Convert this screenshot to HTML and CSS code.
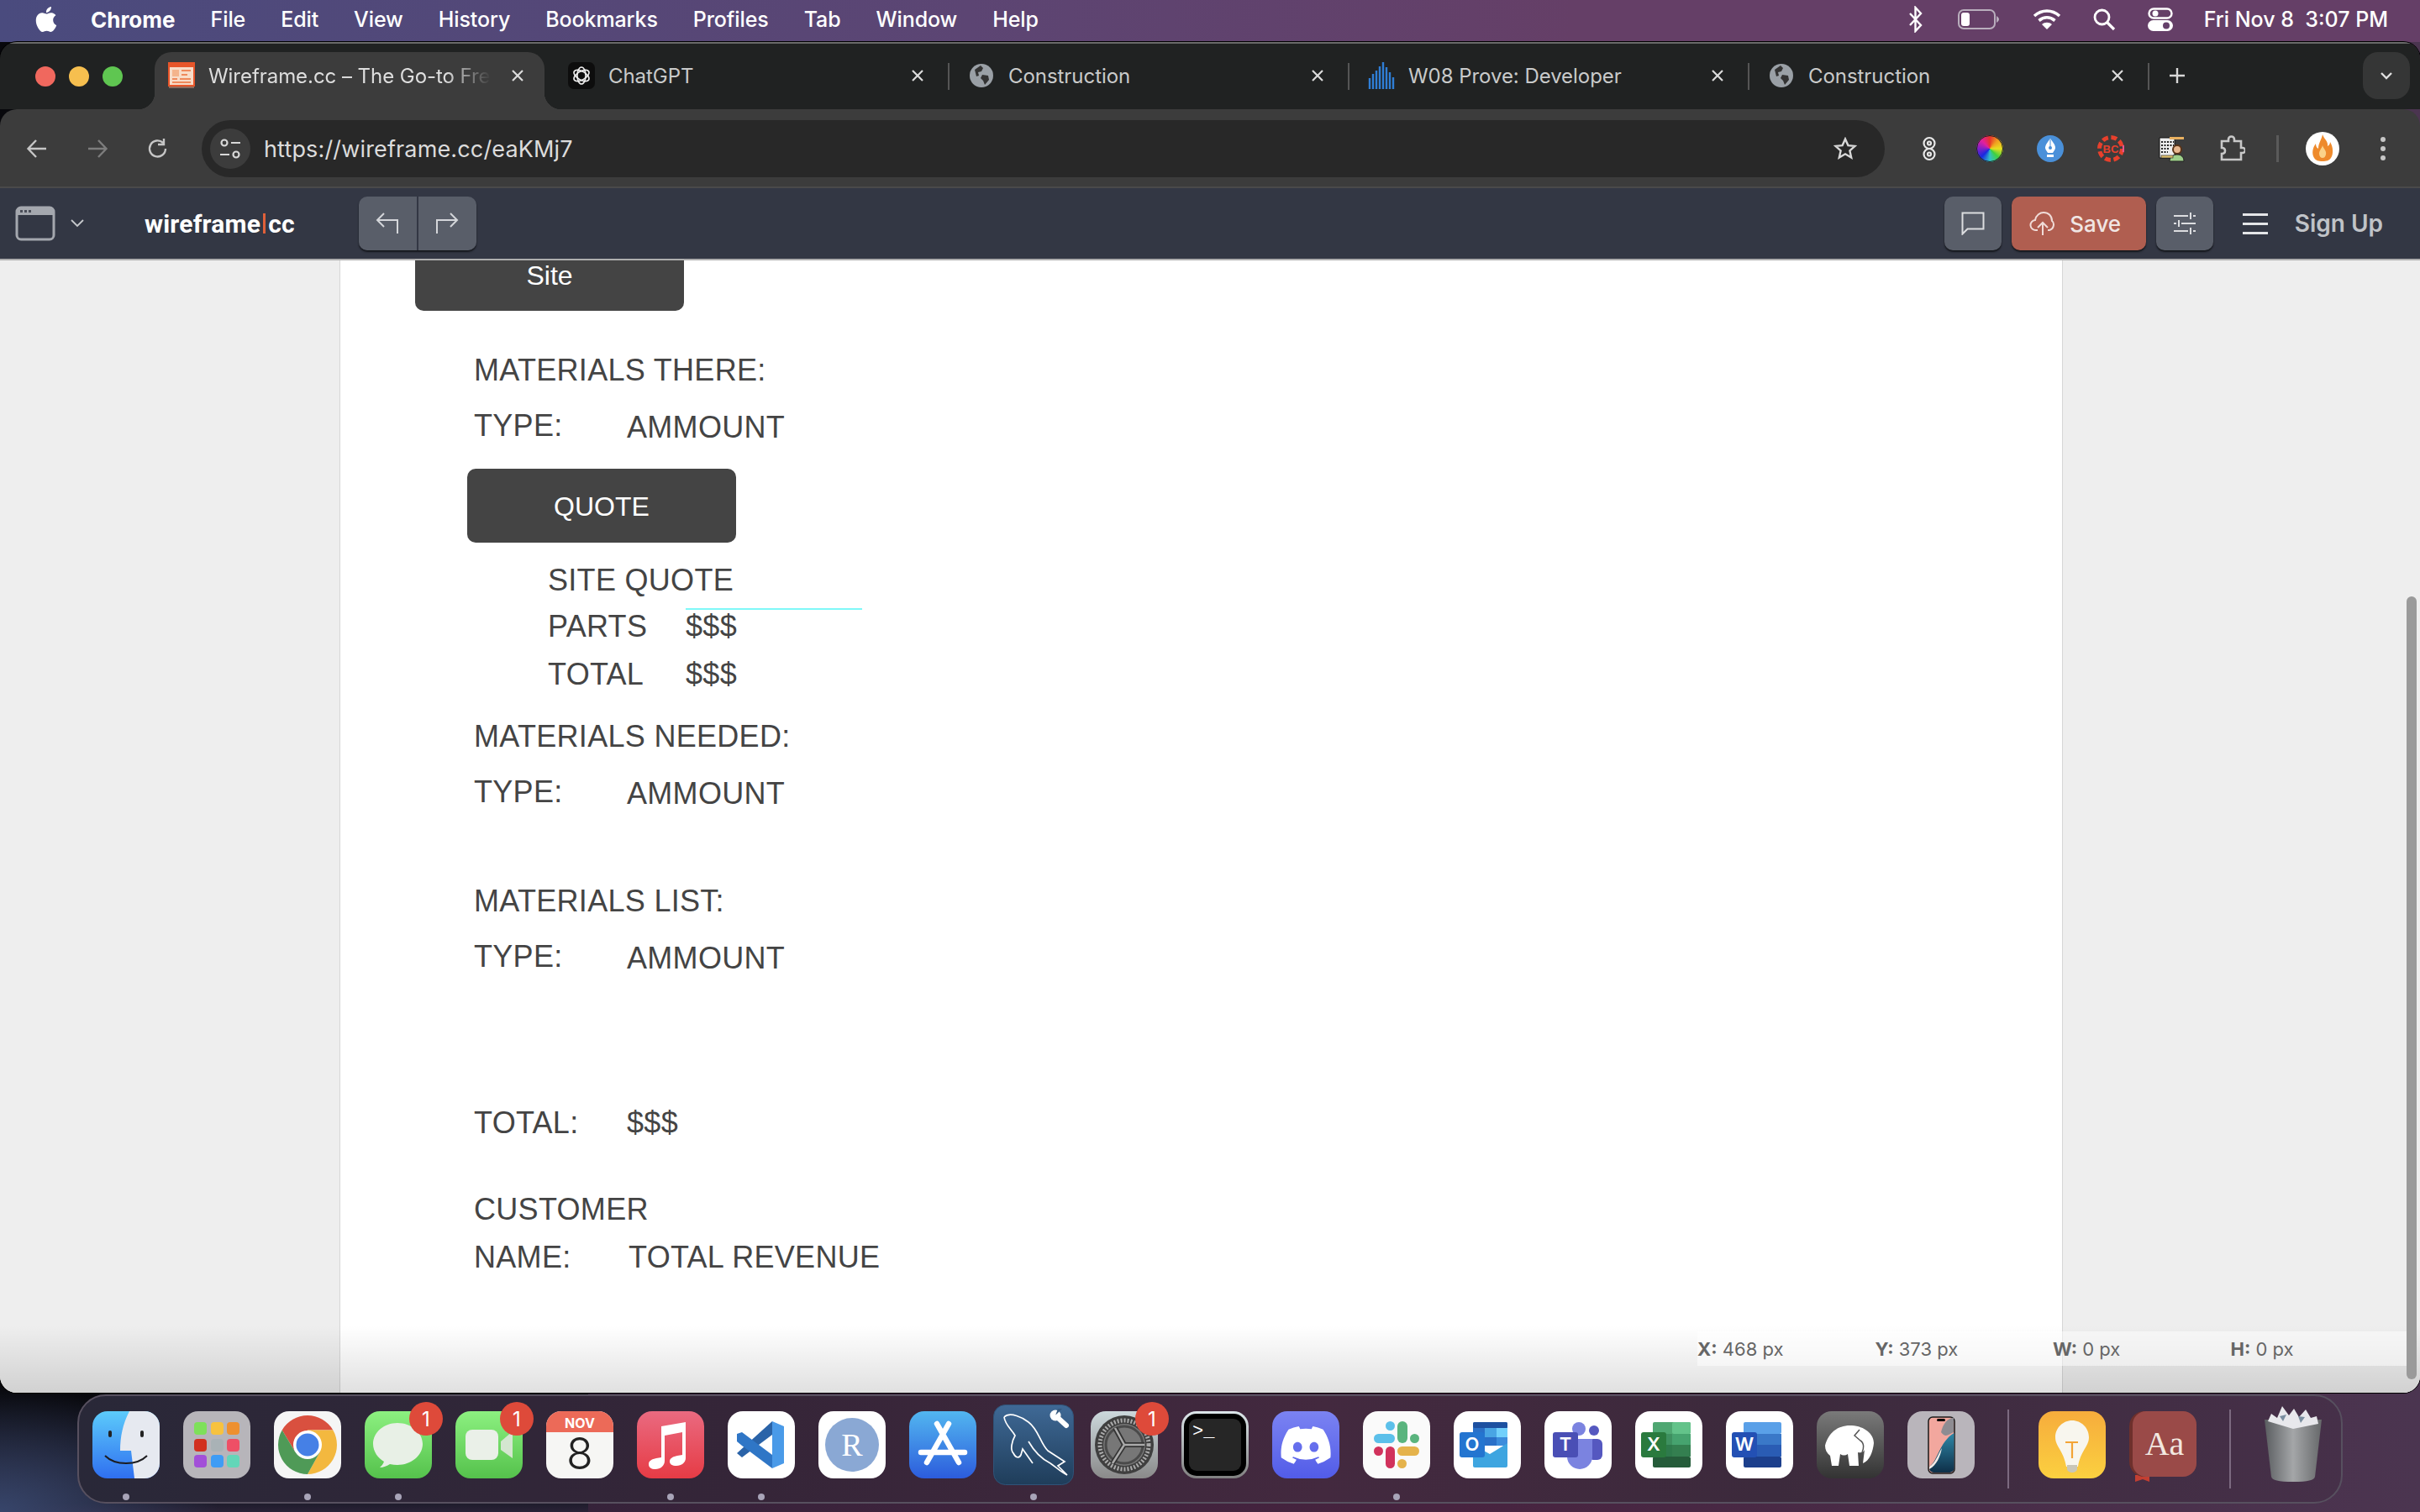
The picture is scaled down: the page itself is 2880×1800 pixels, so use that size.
FILE: index.html
```html
<!DOCTYPE html>
<html>
<head>
  <meta charset="utf-8">
  <title>Wireframe.cc</title>
  <link rel="stylesheet" href="styles.css">
</head>
<body>
<div class="desktop">

  <!-- mac menu bar -->
  <div class="menubar">
    <svg class="apple" viewBox="0 0 24 24"><path fill="#fff" d="M12.152 6.896c-.948 0-2.415-1.078-3.96-1.04-2.04.027-3.91 1.183-4.961 3.014-2.117 3.675-.546 9.103 1.519 12.09 1.013 1.454 2.208 3.09 3.792 3.039 1.52-.065 2.09-.987 3.935-.987 1.831 0 2.35.987 3.96.948 1.637-.026 2.676-1.48 3.676-2.948 1.156-1.688 1.636-3.325 1.662-3.415-.039-.013-3.182-1.221-3.22-4.857-.026-3.04 2.48-4.494 2.597-4.559-1.429-2.09-3.623-2.324-4.39-2.376-2-.156-3.675 1.09-4.61 1.09zM15.53 3.83c.843-1.012 1.4-2.427 1.245-3.83-1.207.052-2.662.805-3.532 1.818-.78.896-1.454 2.338-1.273 3.714 1.338.104 2.715-.688 3.559-1.701"/></svg>
    <span class="menu-app">Chrome</span>
    <span>File</span><span>Edit</span><span>View</span><span>History</span><span>Bookmarks</span><span>Profiles</span><span>Tab</span><span>Window</span><span>Help</span>
    <div class="menu-status">
      <svg class="st-bt" viewBox="0 0 20 32"><path fill="none" stroke="#fff" stroke-width="2.4" d="M3 9l13 14-6.500 7V2l6.500 7L3 23"/></svg>
      <svg class="st-batt" viewBox="0 0 50 26"><rect x="1" y="2" width="43" height="22" rx="6" fill="none" stroke="#b9aebd" stroke-width="2"/><rect x="4" y="5" width="10" height="16" rx="3" fill="#fff"/><path d="M46 9c2 1 3 3 3 4s-1 3-3 4z" fill="#b9aebd"/></svg>
      <svg class="st-wifi" viewBox="0 0 34 26"><path fill="none" stroke="#fff" stroke-width="3.600" d="M2 9c9-8 21-8 30 0M7.500 14.500c6-5 13-5 19 0"/><path fill="#fff" d="M17 25l-6-6c3.500-3 8.500-3 12 0z"/></svg>
      <svg class="st-search" viewBox="0 0 28 28"><circle cx="11.500" cy="11.500" r="8.500" fill="none" stroke="#fff" stroke-width="2.800"/><path d="M18 18l8 8" stroke="#fff" stroke-width="3.200"/></svg>
      <svg class="st-cc" viewBox="0 0 30 28"><rect x="1.500" y="1.500" width="27" height="11" rx="5.500" fill="none" stroke="#fff" stroke-width="2.400"/><circle cx="9" cy="7" r="3.500" fill="#fff"/><rect x="0" y="15" width="30" height="13" rx="6.500" fill="#fff"/><circle cx="22" cy="21.500" r="4" fill="#65406a"/></svg>
      <span class="clock">Fri Nov 8&nbsp;&nbsp;3:07 PM</span>
    </div>
  </div>

  <div class="window">

    <!-- tabs -->
    <div class="tabstrip">
      <div class="lights"><i class="red"></i><i class="yellow"></i><i class="green"></i></div>

      <div class="tab active">
        <svg class="favicon" viewBox="0 0 32 32"><rect x="1" y="1" width="30" height="27" fill="#f8dcc8" stroke="#e8562a" stroke-width="2"/><rect x="1" y="1" width="30" height="5" fill="#e8562a"/><rect x="5" y="9" width="8" height="8" fill="#f4b48c"/><path d="M16 10h11M16 15h7M5 20h6M14 20h13M5 24h22" stroke="#ef8a5c" stroke-width="2"/><rect x="1" y="29" width="30" height="2" fill="#8c6a5c"/></svg>
        <span class="tab-title fade">Wireframe.cc – The Go-to Fre</span>
        <svg class="tab-x" viewBox="0 0 16 16"><path d="M2 2l12 12M14 2L2 14"/></svg>
      </div>

      <div class="tab">
        <svg class="favicon" viewBox="0 0 32 32"><rect width="32" height="32" rx="7" fill="#0d0d0d"/><g fill="none" stroke="#eee" stroke-width="1.600"><ellipse cx="16" cy="16" rx="5" ry="10"/><ellipse cx="16" cy="16" rx="5" ry="10" transform="rotate(60 16 16)"/><ellipse cx="16" cy="16" rx="5" ry="10" transform="rotate(120 16 16)"/></g></svg>
        <span class="tab-title">ChatGPT</span>
        <svg class="tab-x" viewBox="0 0 16 16"><path d="M2 2l12 12M14 2L2 14"/></svg>
      </div>

      <div class="tab">
        <svg class="favicon" viewBox="0 0 32 32"><circle cx="16" cy="16" r="14" fill="#9aa0a6"/><path fill="#333" d="M8 9l7-5 3 3-2 4-4 1 1 4-3 1zM17 15l7 1 1 5-5 6-2-5-3-3z"/></svg>
        <span class="tab-title">Construction</span>
        <svg class="tab-x" viewBox="0 0 16 16"><path d="M2 2l12 12M14 2L2 14"/></svg>
      </div>

      <div class="tab">
        <svg class="favicon" viewBox="0 0 32 32"><path stroke="#2f7ed6" stroke-width="2.400" d="M2 32V19M6 32V14M10 32V10M14 32V5M18 32V0M22 32V6M26 32V12M30 32V18"/></svg>
        <span class="tab-title">W08 Prove: Developer</span>
        <svg class="tab-x" viewBox="0 0 16 16"><path d="M2 2l12 12M14 2L2 14"/></svg>
      </div>

      <div class="tab">
        <svg class="favicon" viewBox="0 0 32 32"><circle cx="16" cy="16" r="14" fill="#9aa0a6"/><path fill="#333" d="M8 9l7-5 3 3-2 4-4 1 1 4-3 1zM17 15l7 1 1 5-5 6-2-5-3-3z"/></svg>
        <span class="tab-title">Construction</span>
        <svg class="tab-x" viewBox="0 0 16 16"><path d="M2 2l12 12M14 2L2 14"/></svg>
      </div>

      <svg class="tab-plus" viewBox="0 0 20 20"><path d="M10 1v18M1 10h18"/></svg>
      <div class="tab-menu"><svg viewBox="0 0 16 10"><path d="M2 2l6 6 6-6"/></svg></div>
    </div>

    <!-- chrome toolbar -->
    <div class="toolbar">
      <div class="nav-btn"><svg viewBox="0 0 26 26"><path d="M24 13H3M12 3L2.500 13 12 23"/></svg></div>
      <div class="nav-btn dim"><svg viewBox="0 0 26 26"><path d="M2 13h21M14 3l9.500 10L14 23"/></svg></div>
      <div class="nav-btn"><svg viewBox="0 0 26 26"><path d="M22 13a9.500 9.500 0 1 1-3-7M20 1v7h-7"/></svg></div>
      <div class="urlbar">
        <div class="site-info"><svg viewBox="0 0 26 26"><circle cx="6" cy="6" r="3.500"/><path d="M14 6h11M1 20h11"/><circle cx="20" cy="20" r="3.500"/></svg></div>
        <span class="url">https://wireframe.cc/eaKMj7</span>
        <svg class="star" viewBox="0 0 28 28"><path d="M14 2.500l3.400 7.600 8.100.8-6.100 5.500 1.800 8.100L14 20.300l-7.200 4.200 1.800-8.100-6.100-5.500 8.100-.8z"/></svg>
      </div>
      <div class="ext"><svg viewBox="0 0 32 32"><g fill="none" stroke="#e8e8e8" stroke-width="2.200"><circle cx="16" cy="9.500" r="6.500"/><circle cx="16" cy="22.500" r="6.500"/><circle cx="16" cy="9.500" r="2"/><circle cx="16" cy="22.500" r="2"/></g></svg></div>
      <div class="ext"><div class="ext-wheel"></div></div>
      <div class="ext"><svg viewBox="0 0 32 32"><circle cx="16" cy="16" r="16" fill="#4a90d9"/><path fill="#fff" d="M16 4c-4 5-6 8-6 11 0 2 2 4 3 6h6c1-2 3-4 3-6 0-3-2-6-6-11z"/><circle cx="16" cy="15" r="2" fill="#4a90d9"/><path stroke="#4a90d9" d="M16 5v9"/><rect x="12" y="23" width="8" height="3" fill="#fff"/></svg></div>
      <div class="ext"><svg viewBox="0 0 32 32"><circle cx="16" cy="16" r="13.500" fill="none" stroke="#e8402c" stroke-width="5" stroke-dasharray="7 3.600"/><path d="M31 12a16 16 0 0 1 0 8" stroke="#e8558c" stroke-width="3" fill="none"/><text class="ext-bc" x="16" y="21">BC</text></svg></div>
      <div class="ext"><svg viewBox="0 0 32 32"><path fill="#eee" stroke="#111" d="M2 3h18v24H2z"/><path stroke="#222" stroke-width="2" stroke-dasharray="2 1.500" d="M4 8h15M4 12h15M4 16h10M4 20h8"/><rect x="14" y="2" width="17" height="3" fill="#e8b060"/><circle cx="23" cy="17" r="5" fill="#e8b890" stroke="#5a3418" stroke-width="2"/><path fill="#9ed08a" stroke="#222" d="M14 31c0-5 4-8 9-8s8 3 8 8z"/><rect x="4" y="24" width="14" height="3" fill="#e0c070" stroke="#222" stroke-width=".6"/></svg></div>
      <div class="ext"><svg viewBox="0 0 32 32"><path fill="none" stroke="#c8c8c8" stroke-width="2.600" d="M4 7h8v-2a3.500 3.500 0 0 1 7 0v2h8v8h2a3 3 0 0 1 0 6h-2v8H4v-7c3 0 4-1.500 4-3.500S7 15 4 15z"/></svg></div>
      <div class="ext-sep"></div>
      <div class="avatar"><svg viewBox="0 0 40 40"><circle cx="20" cy="20" r="20" fill="#fff"/><path fill="#ee8a2c" d="M20 3c2 6 7 8 6 14 2-1 3-3 3-5 4 6 4 15 1 19-2 3-5 4-10 4s-8-1-10-4c-3-5-2-12 2-17 0 3 1 5 3 6 0-7 4-11 5-17z"/><path fill="#fbd38a" d="M20 16c1 4 5 6 4 11-1 3-2 4-4 4s-4-2-4-5c0-4 3-6 4-10z"/></svg></div>
      <div class="kebab"><i></i><i></i><i></i></div>
    </div>

    <!-- wireframe.cc toolbar -->
    <div class="appbar">
      <svg class="frame-icon" viewBox="0 0 48 42"><rect x="2" y="2" width="44" height="38" rx="5" fill="none" stroke="#a4a7ae" stroke-width="3"/><path d="M2 11V7a5 5 0 0 1 5-5h34a5 5 0 0 1 5 5v4z" fill="#a4a7ae"/><path d="M6 6.500h3M11 6.500h3M16 6.500h3" stroke="#4a4d58" stroke-width="3"/></svg>
      <svg class="frame-chev" viewBox="0 0 16 10"><path d="M1 1l7 7 7-7"/></svg>
      <div class="logo">wireframe<i></i>cc</div>
      <div class="undo-group">
        <button class="undo-btn"><svg viewBox="0 0 30 30"><path d="M27 27V11H3M11 3l-8 8 8 8"/></svg></button>
        <button class="undo-btn"><svg viewBox="0 0 30 30"><path d="M3 27V11h24M19 3l8 8-8 8"/></svg></button>
      </div>
      <div class="app-right">
        <button class="tool-btn"><svg viewBox="0 0 28 28"><path d="M1.500 1.500h25v19h-19l-6 6z"/></svg></button>
        <button class="save-btn"><svg viewBox="0 0 32 32"><path d="M10 24H8a6 6 0 0 1-1-12c1-6 6-9 10-9 6 0 10 4 10 10 3 2 3 9-3 11h-2M16 30V16M10 21l6-6 6 6"/></svg>Save</button>
        <button class="tool-btn"><svg viewBox="0 0 28 28"><path d="M1 5h17M24 5h3M21 1v8M1 14h3M10 14h17M7 10v8M1 23h17M24 23h3M21 19v8"/></svg></button>
        <div class="burger"><i></i><i></i><i></i></div>
        <span class="signup">Sign Up</span>
      </div>
    </div>

    <!-- page area -->
    <div class="workspace">
      <div class="side"></div>
      <div class="canvas">
        <div class="wf-btn wf-site">Site</div>
        <div class="wf-text x1 y1">MATERIALS THERE:</div>
        <div class="wf-text x1 y2">TYPE:</div>
        <div class="wf-text x2 y2b">AMMOUNT</div>
        <div class="wf-btn wf-quote">QUOTE</div>
        <div class="wf-text x3 y3">SITE QUOTE</div>
        <div class="wf-line"></div>
        <div class="wf-text x3 y4">PARTS</div>
        <div class="wf-text x4 y4">$$$</div>
        <div class="wf-text x3 y5">TOTAL</div>
        <div class="wf-text x4 y5">$$$</div>
        <div class="wf-text x1 y6">MATERIALS NEEDED:</div>
        <div class="wf-text x1 y7">TYPE:</div>
        <div class="wf-text x2 y7b">AMMOUNT</div>
        <div class="wf-text x1 y8">MATERIALS LIST:</div>
        <div class="wf-text x1 y9">TYPE:</div>
        <div class="wf-text x2 y9b">AMMOUNT</div>
        <div class="wf-text x1 y10">TOTAL:</div>
        <div class="wf-text x2 y10">$$$</div>
        <div class="wf-text x1 y11">CUSTOMER</div>
        <div class="wf-text x1 y12">NAME:</div>
        <div class="wf-text x5 y12">TOTAL REVENUE</div>
      </div>
      <div class="side"></div>
      <div class="fade-bottom"></div>
      <div class="coords">
        <span><b>X:</b> 468 px</span>
        <span><b>Y:</b> 373 px</span>
        <span><b>W:</b> 0 px</span>
        <span><b>H:</b> 0 px</span>
      </div>
      <div class="scroll-thumb"></div>
    </div>
  </div>

  <!-- dock -->
  <div class="dock">
    <div class="dock-item dotted"><svg viewBox="0 0 80 80"><defs><linearGradient id="fb" x1="0" y1="0" x2="0" y2="1"><stop offset="0" stop-color="#5ccbfb"/><stop offset="1" stop-color="#2f6ff0"/></linearGradient></defs><rect width="80" height="80" rx="18" fill="url(#fb)"/><path fill="#e6e9f0" d="M44 0h18a18 18 0 0 1 18 18v44a18 18 0 0 1-18 18H50l-4-33H33c0-16 3-32 11-47z"/><rect x="19" y="23" width="4" height="8" rx="2" fill="#222"/><rect x="57" y="23" width="4" height="8" rx="2" fill="#222"/><path d="M15 53c12 12 38 12 50 0" fill="none" stroke="#1c1c20" stroke-width="2"/></svg></div>

    <div class="dock-item"><svg viewBox="0 0 80 80"><rect width="80" height="80" rx="18" fill="#b7b5ba"/><rect x="13" y="13" width="15" height="15" rx="4" fill="#7ee05a"/><rect x="33" y="13" width="15" height="15" rx="4" fill="#f7c23f"/><rect x="52" y="13" width="15" height="15" rx="4" fill="#ee9030"/><rect x="13" y="33" width="15" height="15" rx="4" fill="#d2301f"/><rect x="33" y="33" width="15" height="15" rx="4" fill="#a9b2b6"/><rect x="52" y="33" width="15" height="15" rx="4" fill="#ee4f66"/><rect x="13" y="52" width="15" height="15" rx="4" fill="#a24fd8"/><rect x="33" y="52" width="15" height="15" rx="4" fill="#3f9cf5"/><rect x="52" y="52" width="15" height="15" rx="4" fill="#63d6b8"/></svg></div>

    <div class="dock-item dotted"><svg viewBox="0 0 80 80"><rect width="80" height="80" rx="18" fill="#f5f5f5"/><path fill="#d9503f" d="M9.700 22.500a35 35 0 0 1 60.600 0H40L25 48z"/><path fill="#f3b83f" d="M70.300 22.500A35 35 0 0 1 40 75l15-27-15-25.500z"/><path fill="#4f9a57" d="M40 75A35 35 0 0 1 9.700 22.500L25 48l30 0z"/><circle cx="40" cy="40" r="17" fill="#fff"/><circle cx="40" cy="40" r="13.500" fill="#4580e6"/></svg></div>

    <div class="dock-item dotted"><svg viewBox="0 0 80 80"><defs><linearGradient id="gr" x1="0" y1="0" x2="0" y2="1"><stop offset="0" stop-color="#8cf080"/><stop offset="1" stop-color="#55c24c"/></linearGradient></defs><rect width="80" height="80" rx="18" fill="url(#gr)"/><path fill="#e8f0e6" d="M39 14c-16 0-29 11-29 25 0 9 6 17 13 21-1 3-3 5-5 7 4 0 9-2 12-4 3 .5 6 1 9 1 16 0 30-11 30-25S55 14 39 14z"/></svg><b class="badge">1</b></div>

    <div class="dock-item"><svg viewBox="0 0 80 80"><rect width="80" height="80" rx="18" fill="url(#gr)"/><rect x="12" y="22" width="39" height="36" rx="8" fill="#eaf0e8"/><path fill="#d4e6d0" d="M54 36l14-12v32L54 46z"/></svg><b class="badge">1</b></div>

    <div class="dock-item"><svg viewBox="0 0 80 80"><rect width="80" height="80" rx="18" fill="#f6f6f4"/><path fill="#ec6a58" d="M0 25V18A18 18 0 0 1 18 0h44a18 18 0 0 1 18 18v7z"/><text class="ic-nov" x="40" y="20">NOV</text><text class="ic-eight" x="40" y="69">8</text></svg></div>

    <div class="dock-item dotted"><svg viewBox="0 0 80 80"><defs><linearGradient id="mu" x1="0" y1="0" x2="0" y2="1"><stop offset="0" stop-color="#ea6a80"/><stop offset="1" stop-color="#e63b45"/></linearGradient></defs><rect width="80" height="80" rx="18" fill="url(#mu)"/><path fill="#fff" d="M29 18l29-5v43c0 5-5 9-11 9-5 0-8-2-8-5 0-4 4-6 9-7l6-1V25l-21 4v30c0 6-5 10-11 10-5 0-8-2-8-6 0-4 4-6 9-7l6-1z"/></svg></div>

    <div class="dock-item dotted"><svg viewBox="0 0 80 80"><rect width="80" height="80" rx="18" fill="#fff"/><path fill="#2a63a8" d="M53 12L11 50l6 5 36-27z"/><path fill="#2f76c6" d="M11 27l6-2 36 27v16l-36-27-6-5z"/><path fill="#4a9ae8" d="M53 12l14 6v44l-14 6z"/></svg></div>

    <div class="dock-item"><svg viewBox="0 0 80 80"><rect width="80" height="80" rx="18" fill="#fff"/><circle cx="40" cy="40" r="32" fill="#8aa8d4"/><text class="ic-r" x="40" y="53">R</text></svg></div>

    <div class="dock-item"><svg viewBox="0 0 80 80"><defs><linearGradient id="as" x1="0" y1="0" x2="0" y2="1"><stop offset="0" stop-color="#52b6f0"/><stop offset="1" stop-color="#2c5cdc"/></linearGradient></defs><rect width="80" height="80" rx="18" fill="url(#as)"/><path fill="none" stroke="#fff" stroke-width="6.500" stroke-linecap="round" d="M33 15l26 46M47 15L21 61M14 49h52"/></svg></div>

    <div class="dock-item dotted big"><svg viewBox="0 0 96 96"><defs><linearGradient id="my" x1="0" y1="0" x2="0" y2="1"><stop offset="0" stop-color="#3f6996"/><stop offset="1" stop-color="#1f3d5a"/></linearGradient></defs><rect x=".5" y=".5" width="95" height="95" rx="14" fill="url(#my)" stroke="#2f5378"/><path fill="none" stroke="#fff" stroke-width="1.700" d="M13 15C20 8 36 16 42 21 54 30 56 46 65 55L85 68 77 73 88 84C80 80 74 74 68 70 60 66 50 58 42 44M13 15C14 24 22 30 26 37 22 44 20 54 24 58 27 64 31 64 33 60L35 53 47 70"/><circle cx="74" cy="13" r="6.500" fill="#fff"/><path fill="#35597f" d="M74 13l3-8h5z"/><path stroke="#fff" stroke-width="6" stroke-linecap="round" d="M76 15l11 10"/></svg></div>

    <div class="dock-item"><svg viewBox="0 0 80 80"><defs><linearGradient id="sy" x1="0" y1="0" x2="0" y2="1"><stop offset="0" stop-color="#ccd8dc"/><stop offset="1" stop-color="#8a8a8a"/></linearGradient></defs><rect width="80" height="80" rx="18" fill="url(#sy)"/><circle cx="40" cy="40" r="35" fill="#3f3f3f"/><circle cx="40" cy="40" r="29" fill="none" stroke="#aaa" stroke-width="5" stroke-dasharray="2 2"/><circle cx="40" cy="40" r="25" fill="#777"/><circle cx="40" cy="40" r="22" fill="none" stroke="#4a4a4a" stroke-width="3"/><path stroke="#333" stroke-width="6" d="M40 40l-11-20M40 40l24 0M40 40L26 62"/><path stroke="#aaa" stroke-width="2.500" d="M40 40l-11-20M40 40l24 0M40 40L26 62"/></svg><b class="badge">1</b></div>

    <div class="dock-item"><svg viewBox="0 0 80 80"><defs><linearGradient id="te" x1="0" y1="0" x2="0" y2="1"><stop offset="0" stop-color="#dce6ea"/><stop offset="1" stop-color="#808080"/></linearGradient></defs><rect width="80" height="80" rx="18" fill="url(#te)"/><rect x="3" y="3" width="74" height="74" rx="15" fill="#000"/><rect x="9" y="9" width="62" height="62" rx="9" fill="#262626"/><text class="ic-term" x="13" y="30">&gt;_</text></svg></div>

    <div class="dock-item"><svg viewBox="0 0 80 80"><defs><linearGradient id="di" x1="0" y1="0" x2="0" y2="1"><stop offset="0" stop-color="#7b83f2"/><stop offset="1" stop-color="#525ce8"/></linearGradient></defs><rect width="80" height="80" rx="18" fill="url(#di)"/><g transform="translate(10.500 18) scale(.465)"><path fill="#fff" d="M107.7,8.07A105.15,105.15,0,0,0,81.47,0a72.06,72.06,0,0,0-3.36,6.83A97.68,97.68,0,0,0,49,6.83,72.37,72.37,0,0,0,45.64,0,105.89,105.89,0,0,0,19.39,8.09C2.79,32.65-1.71,56.6.54,80.21h0A105.73,105.73,0,0,0,32.71,96.36,77.7,77.7,0,0,0,39.6,85.25a68.42,68.42,0,0,1-10.85-5.18c.91-.66,1.8-1.34,2.66-2a75.57,75.57,0,0,0,64.32,0c.87.71,1.76,1.39,2.66,2a68.68,68.68,0,0,1-10.87,5.19,77,77,0,0,0,6.89,11.1A105.25,105.25,0,0,0,126.6,80.22h0C129.24,52.84,122.09,29.11,107.7,8.07ZM42.45,65.69C36.18,65.69,31,60,31,53s5-12.74,11.43-12.74S54,46,53.89,53,48.84,65.69,42.45,65.69Zm42.24,0C78.41,65.69,73.25,60,73.25,53s5-12.74,11.44-12.74S96.23,46,96.12,53,91.08,65.69,84.69,65.69Z"/></g></svg></div>

    <div class="dock-item dotted"><svg viewBox="0 0 80 80"><rect width="80" height="80" rx="18" fill="#fafafa"/><rect x="13" y="27" width="25" height="11" rx="5.500" fill="#5cc0ea"/><circle cx="32.500" cy="17.500" r="5.500" fill="#5cc0ea"/><rect x="41" y="12" width="12" height="26" rx="6" fill="#5ab47e"/><circle cx="61.500" cy="32.500" r="5.500" fill="#5ab47e"/><rect x="41" y="42" width="26" height="11" rx="5.500" fill="#e5b34c"/><circle cx="46.500" cy="62.500" r="5.500" fill="#e5b34c"/><rect x="27" y="42" width="11" height="26" rx="5.500" fill="#d1325c"/><circle cx="18.500" cy="47.500" r="5.500" fill="#d1325c"/></svg></div>

    <div class="dock-item"><svg viewBox="0 0 80 80"><rect width="80" height="80" rx="18" fill="#fff"/><rect x="23" y="13" width="41" height="28" rx="2" fill="#2a70c8"/><rect x="23" y="13" width="41" height="7" rx="2" fill="#1d50a0"/><rect x="51" y="20" width="13" height="11" fill="#72d0fb"/><rect x="37" y="20" width="14" height="11" fill="#49a5e4"/><rect x="51" y="31" width="13" height="10" fill="#3c8cdc"/><path fill="#3ea5e0" d="M23 40l20 11 21-13v27a2 2 0 0 1-2 2H25a2 2 0 0 1-2-2z"/><rect x="7" y="25" width="30" height="30" rx="3" fill="#2475d0"/><text class="ic-office" x="22" y="47">O</text></svg></div>

    <div class="dock-item"><svg viewBox="0 0 80 80"><rect width="80" height="80" rx="18" fill="#fff"/><circle cx="59" cy="23" r="6" fill="#5558c0"/><rect x="52" y="33" width="17" height="25" rx="6" fill="#5558c0"/><circle cx="41" cy="21" r="8" fill="#7b83e0"/><path fill="#7b83e0" d="M27 33h30v21a15 15 0 0 1-30 0z"/><rect x="10" y="25" width="30" height="30" rx="3" fill="#4a4fb5"/><text class="ic-office" x="25" y="47">T</text></svg></div>

    <div class="dock-item"><svg viewBox="0 0 80 80"><rect width="80" height="80" rx="18" fill="#fff"/><rect x="21" y="13" width="45" height="14" rx="2" fill="#4fa772"/><rect x="44" y="13" width="22" height="14" rx="2" fill="#63c38a"/><rect x="21" y="27" width="23" height="13" fill="#3e9060"/><rect x="44" y="27" width="22" height="13" fill="#46a36f"/><rect x="21" y="40" width="23" height="14" fill="#2e7a4c"/><rect x="44" y="40" width="22" height="14" fill="#347f50"/><rect x="21" y="54" width="45" height="13" rx="2" fill="#255c3a"/><rect x="7" y="25" width="30" height="30" rx="3" fill="#2a7a3e"/><text class="ic-office" x="22" y="47">X</text></svg></div>

    <div class="dock-item"><svg viewBox="0 0 80 80"><rect width="80" height="80" rx="18" fill="#fff"/><rect x="21" y="13" width="45" height="14" rx="2" fill="#5aa0e8"/><rect x="21" y="27" width="45" height="13" fill="#3a78c8"/><rect x="21" y="40" width="45" height="14" fill="#2a5cb4"/><rect x="21" y="54" width="45" height="13" rx="2" fill="#1c3f8c"/><rect x="7" y="25" width="30" height="30" rx="3" fill="#2350b4"/><text class="ic-office" x="22" y="47">W</text></svg></div>

    <div class="dock-item"><svg viewBox="0 0 80 80"><defs><linearGradient id="ma" x1="0" y1="0" x2="0" y2="1"><stop offset="0" stop-color="#7a7a7a"/><stop offset="1" stop-color="#333"/></linearGradient></defs><rect width="80" height="80" rx="18" fill="url(#ma)"/><path fill="#fff" d="M42 17c-16-1-28 8-32 24 0 5 2 9 6 12l2 12h8l2-14c3 2 6 2 9 0l2 14h11l-1-16c5 1 7-1 8-3l-2 16c8-3 12-14 13-24 0-11-11-20-26-21z"/><path fill="none" stroke="#555" stroke-width="1.500" d="M51 22l-6 7 7 6c5 3 4 10 2 14"/></svg></div>

    <div class="dock-item"><svg viewBox="0 0 80 80"><defs><linearGradient id="ip" x1="0" y1="0" x2="0" y2="1"><stop offset="0" stop-color="#2f88a8"/><stop offset="1" stop-color="#0e2f48"/></linearGradient></defs><rect width="80" height="80" rx="18" fill="#b9b5bb"/><rect x="25" y="7" width="31" height="67" rx="5" fill="#f2a79e" stroke="#1a1a1a" stroke-width="1.500"/><path fill="#8e8c92" d="M40 25c2-9 7-17 15-17v17c-6 3-10 7-15 0z"/><path fill="url(#ip)" d="M55.500 26v42a5 5 0 0 1-5 5H31a5 5 0 0 1-5-5v-2c10-6 12-30 29.500-40z"/><path fill="#f4ece8" d="M26 66c7-4 10-14 15-22-2 10-6 20-15 25z"/><rect x="35" y="9" width="10" height="3" rx="1.500" fill="#000"/></svg></div>

    <div class="dock-sep"></div>

    <div class="dock-item"><svg viewBox="0 0 80 80"><defs><linearGradient id="ti" x1="0" y1="0" x2="0" y2="1"><stop offset="0" stop-color="#f6ac3c"/><stop offset="1" stop-color="#fbd040"/></linearGradient></defs><rect width="80" height="80" rx="18" fill="url(#ti)"/><path fill="#f8f6ee" d="M40 11c-11 0-20 9-20 20 0 11 10 16 13 35h14c3-19 13-24 13-35 0-11-9-20-20-20z"/><path fill="#c9c6b8" d="M34 64h12v5c0 2-3 4-6 4s-6-2-6-4z"/><path d="M32 37h15M40 37v19" stroke="#f3a436" stroke-width="2.200" fill="none"/></svg></div>

    <div class="dock-item"><svg viewBox="0 0 80 80"><path fill="#c33f32" d="M7 76h17v8l-8-3-9 3z"/><rect width="80" height="78" rx="18" fill="#6e302c"/><rect x="4" y="0" width="76" height="78" rx="16" fill="#9a4a48"/><text class="ic-aa" x="42" y="52">Aa</text></svg></div>

    <div class="dock-sep wide"></div>

    <div class="dock-item trash"><svg viewBox="0 0 72 92"><defs><linearGradient id="tr" x1="0" y1="0" x2="1" y2="0"><stop offset="0" stop-color="#5a5d60"/><stop offset=".5" stop-color="#a4a6a8"/><stop offset="1" stop-color="#66686a"/></linearGradient></defs><path fill="url(#tr)" d="M2 18h68l-8 68c-1 4-8 6-26 6s-25-2-26-6z"/><path fill="#e8e8ec" d="M6 20l4-9 7 5 6-14 8 11 6-8 6 10 8-9 6 10 7-2 2 9-30 6z"/><path fill="#7a8ea0" d="M20 14l4 6 4-8zM42 14l3 8 5-7z"/></svg></div>
  </div>
</div>
</body>
</html>
```

FILE: styles.css
```css
* {
  box-sizing: border-box;
}

html, body {
  margin: 0;
  padding: 0;
}

body {
  width: 2880px;
  height: 1800px;
  overflow: hidden;
  font-family: "Inter", "Liberation Sans", sans-serif;
}

.desktop {
  position: relative;
  width: 2880px;
  height: 1800px;
  overflow: hidden;
  background:
    radial-gradient(ellipse 260px 150px at 0 1800px, #37456a 0, transparent 100%),
    linear-gradient(180deg, #08080c 1658px, #1e1c2c 1790px, #2a2236 1800px) left / 700px 100% no-repeat,
    linear-gradient(90deg, #2a2236 0, #47233f 60%, #4b3550 100%);
}

/* menu bar */
.menubar {
  display: flex;
  align-items: center;
  gap: 42px;
  height: 50px;
  padding: 0 38px 4px 40px;
  background: linear-gradient(90deg, #4a4b7e 0, #5c4573 40%, #653f67 65%, #653f67 100%);
  color: #fff;
  font-size: 25px;
  font-weight: 500;
  letter-spacing: -0.1px;
}

.apple {
  width: 30px;
  height: 34px;
  margin-right: -4px;
}

.menu-app {
  font-size: 26px;
  font-weight: 700;
  letter-spacing: 0;
}

.menu-status {
  display: flex;
  align-items: center;
  margin-left: auto;
}

.st-bt {
  width: 20px;
  height: 32px;
}

.st-batt {
  width: 50px;
  height: 26px;
  margin-left: 40px;
}

.st-wifi {
  width: 34px;
  height: 26px;
  margin-left: 39px;
}

.st-search {
  width: 28px;
  height: 28px;
  margin-left: 37px;
}

.st-cc {
  width: 30px;
  height: 28px;
  margin-left: 38px;
}

.clock {
  margin-left: 37px;
  letter-spacing: 0;
}

/* browser window */
.window {
  display: flex;
  flex-direction: column;
  height: 1608px;
  border-radius: 20px;
  overflow: hidden;
  box-shadow: 0 0 0 1px #000;
}

.tabstrip {
  position: relative;
  display: flex;
  align-items: flex-end;
  height: 80px;
  flex-shrink: 0;
  padding-left: 177px;
  background: #202222;
  box-shadow: inset 0 2px 0 #6a6a6a;
}

.lights {
  position: absolute;
  top: 29px;
  left: 42px;
  display: flex;
  gap: 16px;
}

.lights i {
  width: 24px;
  height: 24px;
  border-radius: 50%;
}

.red { background: #f0685e; }
.yellow { background: #f6bf4f; }
.green { background: #5fc651; }

.tab {
  position: relative;
  display: flex;
  align-items: center;
  width: 476px;
  height: 68px;
  padding: 0 29px 12px 23px;
  color: #c9caca;
  font-size: 24px;
  letter-spacing: -0.05px;
}

.tab:not(.active)::after {
  content: "";
  position: absolute;
  top: 13px;
  right: -1px;
  width: 2px;
  height: 32px;
  background: #555;
}

.tab.active {
  width: 464px;
  margin: 0 5px 0 7px;
  padding: 0 24px 12px 16px;
  border-radius: 20px 20px 0 0;
  background: #3c3c3c;
  color: #dedede;
}

.tab.active::before,
.tab.active::after {
  content: "";
  position: absolute;
  bottom: 0;
  width: 20px;
  height: 20px;
}

.tab.active::before {
  left: -20px;
  background: radial-gradient(circle at 0 0, transparent 20px, #3c3c3c 20.5px);
}

.tab.active::after {
  right: -20px;
  background: radial-gradient(circle at 100% 0, transparent 20px, #3c3c3c 20.5px);
}

.favicon {
  width: 32px;
  height: 32px;
  flex-shrink: 0;
  margin-right: 16px;
}

.tab-title {
  white-space: nowrap;
}

.tab-title.fade {
  -webkit-mask-image: linear-gradient(90deg, #000 84%, transparent 100%);
  mask-image: linear-gradient(90deg, #000 84%, transparent 100%);
}

.tab-x {
  width: 16px;
  height: 16px;
  margin-left: auto;
  flex-shrink: 0;
}

.tab-x path {
  fill: none;
  stroke: #dcdcdc;
  stroke-width: 2.200;
}

.tab-plus {
  width: 20px;
  height: 20px;
  margin: 0 0 30px 24px;
}

.tab-plus path {
  fill: none;
  stroke: #d8d8d8;
  stroke-width: 2.400;
}

.tab-menu {
  position: absolute;
  top: 12px;
  right: 12px;
  display: flex;
  align-items: center;
  justify-content: center;
  width: 56px;
  height: 56px;
  border-radius: 18px;
  background: #353636;
}

.tab-menu svg {
  width: 16px;
  height: 10px;
}

.tab-menu path {
  fill: none;
  stroke: #e0e0e0;
  stroke-width: 2.400;
}

/* chrome toolbar */
.toolbar {
  display: flex;
  align-items: center;
  flex-shrink: 0;
  height: 94px;
  padding: 2px 0 0 8px;
  border-radius: 20px 20px 0 0;
  border-bottom: 2px solid #4a4a4a;
  background: #3c3c3c;
}

.nav-btn {
  display: flex;
  justify-content: center;
  width: 72px;
}

.nav-btn svg {
  width: 26px;
  height: 26px;
}

.nav-btn path {
  fill: none;
  stroke: #c6c6c6;
  stroke-width: 2.400;
}

.nav-btn.dim path {
  stroke: #7d7d7d;
}

.urlbar {
  display: flex;
  align-items: center;
  width: 2003px;
  height: 68px;
  margin: 0 17px 0 16px;
  padding: 0 33px 0 10px;
  border-radius: 34px;
  background: #282828;
}

.site-info {
  display: flex;
  align-items: center;
  justify-content: center;
  width: 48px;
  height: 48px;
  border-radius: 50%;
  background: #3c3c3c;
}

.site-info svg {
  width: 26px;
  height: 26px;
}

.site-info circle,
.site-info path {
  fill: none;
  stroke: #d8d8d8;
  stroke-width: 2.200;
}

.url {
  margin-left: 16px;
  color: #dcdcdc;
  font-size: 27px;
  letter-spacing: 0.15px;
}

.star {
  width: 28px;
  height: 28px;
  margin-left: auto;
}

.star path {
  fill: none;
  stroke: #d8d8d8;
  stroke-width: 2.400;
}

.ext {
  display: flex;
  align-items: center;
  justify-content: center;
  width: 72px;
}

.ext svg,
.ext-wheel {
  width: 32px;
  height: 32px;
}

.ext-wheel {
  border-radius: 50%;
  background: conic-gradient(#e8302c, #f0a020, #e8e020, #40d040, #30c0c8, #1828e0, #8020c8, #e020a0, #e8302c);
  outline: 1px solid #222;
  outline-offset: -1px;
}

.ext-bc {
  fill: #e8402c;
  font-family: "Liberation Sans", sans-serif;
  font-size: 13px;
  font-weight: 700;
  text-anchor: middle;
}

.ext-sep {
  width: 3px;
  height: 32px;
  margin-left: 17px;
  background: #5a5a5a;
}

.avatar {
  width: 40px;
  height: 40px;
  margin-left: 32px;
}

.avatar svg {
  display: block;
  width: 40px;
  height: 40px;
}

.kebab {
  display: flex;
  flex-direction: column;
  gap: 5px;
  margin-left: 49px;
}

.kebab i {
  width: 6px;
  height: 6px;
  border-radius: 50%;
  background: #c6c6c6;
}

/* wireframe.cc toolbar */
.appbar {
  display: flex;
  align-items: center;
  flex-shrink: 0;
  height: 84px;
  padding: 0 44px 0 18px;
  background: #333744;
}

.frame-icon {
  width: 48px;
  height: 42px;
}

.frame-chev {
  width: 16px;
  height: 10px;
  margin-left: 18px;
}

.frame-chev path {
  fill: none;
  stroke: #c6c8cc;
  stroke-width: 1.800;
}

.logo {
  display: flex;
  align-items: center;
  margin-left: 72px;
  color: #fff;
  font-family: "Roboto", sans-serif;
  font-size: 30px;
  font-weight: 700;
  letter-spacing: 0.2px;
}

.logo i {
  width: 3px;
  height: 24px;
  margin: 0 3px;
  background: #e0603a;
}

.undo-group {
  display: flex;
  gap: 2px;
  margin-left: 76px;
  border-radius: 10px;
  box-shadow: 0 2px 2px #15171c;
}

.undo-btn {
  display: flex;
  align-items: center;
  justify-content: center;
  width: 69px;
  height: 64px;
  padding: 0;
  border: 0;
  background: #595e69;
}

.undo-btn:first-child {
  border-radius: 10px 0 0 10px;
}

.undo-btn:last-child {
  border-radius: 0 10px 10px 0;
}

.undo-btn svg {
  width: 30px;
  height: 30px;
}

.undo-btn path {
  fill: none;
  stroke: #d4d6da;
  stroke-width: 2;
}

.app-right {
  display: flex;
  align-items: center;
  margin-left: auto;
}

.tool-btn,
.save-btn {
  display: flex;
  align-items: center;
  justify-content: center;
  height: 64px;
  padding: 0;
  border: 0;
  border-radius: 10px;
  box-shadow: 0 2px 2px #15171c;
  font-family: inherit;
}

.tool-btn {
  width: 68px;
  background: #595e69;
}

.tool-btn svg {
  width: 28px;
  height: 28px;
}

.tool-btn path {
  fill: none;
  stroke: #dcdde0;
  stroke-width: 2;
}

.save-btn {
  width: 160px;
  margin: 0 12px;
  padding-right: 8px;
  background: #b05e50;
  color: #f0e6e4;
  font-size: 26px;
  font-weight: 500;
}

.save-btn svg {
  width: 32px;
  height: 32px;
  margin-right: 16px;
}

.save-btn path {
  fill: none;
  stroke: #f0dcd8;
  stroke-width: 2;
}

.burger {
  display: flex;
  flex-direction: column;
  gap: 8px;
  margin-left: 35px;
}

.burger i {
  width: 30px;
  height: 3px;
  background: #e4e5e8;
}

.signup {
  margin-left: 32px;
  color: #c0c3c8;
  font-size: 28px;
  font-weight: 600;
}

/* page area */
.workspace {
  position: relative;
  display: grid;
  grid-template-columns: 405px 2049px 1fr;
  flex: 1;
  border-top: 2px solid #aeaeae;
  background: #fff;
}

.side {
  background: #eeeeee;
}

.side:first-child {
  border-right: 1px solid #d6d6d6;
}

.side:nth-child(3) {
  border-left: 1px solid #d6d6d6;
}

.canvas {
  position: relative;
  overflow: hidden;
  background: #fff;
}

.wf-text {
  position: absolute;
  margin-top: 2px;
  color: #444;
  font-family: "Liberation Sans", Arial, sans-serif;
  font-size: 36px;
  line-height: 42px;
  letter-spacing: 0.3px;
  white-space: nowrap;
}

.wf-btn {
  position: absolute;
  display: flex;
  align-items: center;
  justify-content: center;
  width: 320px;
  background: #444;
  color: #fff;
  font-family: "Liberation Sans", Arial, sans-serif;
  font-size: 32px;
}

.wf-site {
  left: 89px;
  top: 0;
  height: 60px;
  padding-bottom: 24px;
  border-radius: 0 0 10px 10px;
}

.wf-quote {
  left: 151px;
  top: 248px;
  height: 88px;
  padding-top: 3px;
  border-radius: 10px;
}

.wf-line {
  position: absolute;
  left: 411px;
  top: 414px;
  width: 210px;
  height: 2px;
  background: #7ff8f8;
}

.x1 { left: 159px; }
.x2 { left: 341px; }
.x3 { left: 247px; }
.x4 { left: 411px; }
.x5 { left: 343px; }

.y1 { top: 108px; }
.y2 { top: 174px; }
.y2b { top: 176px; }
.y3 { top: 358px; }
.y4 { top: 413px; }
.y5 { top: 470px; }
.y6 { top: 544px; }
.y7 { top: 610px; }
.y7b { top: 612px; }
.y8 { top: 740px; }
.y9 { top: 806px; }
.y9b { top: 808px; }
.y10 { top: 1004px; }
.y11 { top: 1107px; }
.y12 { top: 1164px; }

.fade-bottom {
  position: absolute;
  left: 0;
  right: 0;
  bottom: 0;
  height: 80px;
  background: linear-gradient(180deg, transparent, rgba(0, 0, 0, 0.12));
  pointer-events: none;
}

.coords {
  position: absolute;
  top: 1275px;
  left: 2020px;
  right: 14px;
  display: flex;
  align-items: center;
  height: 41px;
  background: rgba(255, 255, 255, 0.5);
  color: #666;
  font-size: 22px;
}

.coords span {
  width: 212px;
}

.coords b {
  font-weight: 700;
}

.scroll-thumb {
  position: absolute;
  top: 400px;
  right: 4px;
  bottom: 16px;
  width: 12px;
  border-radius: 6px;
  background: #9a9a9a;
}

/* dock */
.dock {
  position: absolute;
  top: 1660px;
  left: 92px;
  display: flex;
  gap: 28px;
  width: 2696px;
  height: 130px;
  padding: 18px 0 0 16px;
  border: 2px solid #57505f;
  border-radius: 34px;
  background: linear-gradient(90deg, #292838 0, #352538 30%, #43293f 55%, #3c2a3c 75%, #463049 100%);
}

.dock-item {
  position: relative;
  width: 80px;
  height: 80px;
  flex-shrink: 0;
}

.dock-item > svg {
  display: block;
  width: 80px;
  height: 80px;
  overflow: visible;
}

.dock-item.big > svg {
  width: 96px;
  height: 96px;
  margin: -8px;
}

.dock-item.dotted::after {
  content: "";
  position: absolute;
  left: 36px;
  top: 98px;
  width: 8px;
  height: 8px;
  border-radius: 50%;
  background: #a8a4b8;
}

.dock-item.trash {
  width: 72px;
  margin: -8px 0 0 10px;
}

.dock-item.trash > svg {
  width: 72px;
  height: 92px;
}

.dock-sep {
  width: 2px;
  height: 94px;
  margin: -2px 7px 0 11px;
  background: #7c6a80;
}

.dock-sep.wide {
  margin-right: 0;
}

.badge {
  position: absolute;
  top: -11px;
  left: 53px;
  display: flex;
  align-items: center;
  justify-content: center;
  width: 40px;
  height: 40px;
  border-radius: 50%;
  background: #de4a3a;
  color: #fff;
  font-size: 24px;
  font-weight: 400;
}

.ic-nov {
  fill: #fff;
  font-size: 16px;
  font-weight: 700;
  text-anchor: middle;
}

.ic-eight {
  fill: #222;
  font-size: 52px;
  font-weight: 300;
  text-anchor: middle;
}

.ic-r {
  fill: #fff;
  font-family: "Liberation Serif", serif;
  font-size: 38px;
  text-anchor: middle;
}

.ic-term {
  fill: #fff;
  font-family: "Liberation Mono", monospace;
  font-size: 22px;
}

.ic-office {
  fill: #fff;
  font-size: 22px;
  font-weight: 600;
  text-anchor: middle;
}

.ic-aa {
  fill: #f2e8e0;
  font-family: "Liberation Serif", serif;
  font-size: 40px;
  text-anchor: middle;
}
```
